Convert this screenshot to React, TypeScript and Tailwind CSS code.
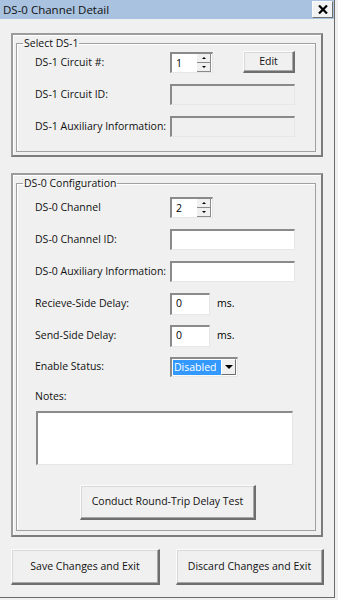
import React from "react";

const font = { fontFamily: '"Open Sans", "Liberation Sans", sans-serif' };

function Sunken({
  className = "",
  white = false,
  children,
}: {
  className?: string;
  white?: boolean;
  children?: React.ReactNode;
}) {
  return (
    <div
      className={`border-t-2 border-l-2 border-t-[#8a8a8a] border-l-[#8a8a8a] border-b border-r border-b-[#e6e6e6] border-r-[#e6e6e6] ${
        white ? "bg-white" : "bg-[#f0f0f0]"
      } ${className}`}
    >
      {children}
    </div>
  );
}

function RaisedButton({
  className = "",
  children,
}: {
  className?: string;
  children: React.ReactNode;
}) {
  return (
    <button
      className={`flex items-center justify-center bg-[#f0f0f0] border-t border-l border-t-[#fcfcfc] border-l-[#fcfcfc] border-b-2 border-r-2 border-b-[#6e6e6e] border-r-[#6e6e6e] shadow-[inset_-1px_-1px_0_#a8a8a8,inset_1px_1px_0_#d8d8d8] text-[#111] ${className}`}
    >
      {children}
    </button>
  );
}

function Spinner({ value }: { value: string }) {
  return (
    <Sunken white className="w-[43px] h-[21px] flex items-center">
      <span className="pl-[4px] flex-1 leading-none">{value}</span>
      <div className="flex flex-col w-[14px] h-full mr-[1px]">
        <div className="flex-1 flex items-center justify-center bg-[#f0f0f0] border-b border-r border-b-[#8a8a8a] border-r-[#8a8a8a]">
          <span className="block w-0 h-0 border-l-[2px] border-r-[2px] border-b-[2px] border-l-transparent border-r-transparent border-b-black" />
        </div>
        <div className="flex-1 flex items-center justify-center bg-[#f0f0f0] border-b border-r border-b-[#8a8a8a] border-r-[#8a8a8a]">
          <span className="block w-0 h-0 border-l-[2px] border-r-[2px] border-t-[2px] border-l-transparent border-r-transparent border-t-black" />
        </div>
      </div>
    </Sunken>
  );
}

function Row({
  label,
  children,
  className = "",
}: {
  label: string;
  children: React.ReactNode;
  className?: string;
}) {
  return (
    <div className={`flex items-center h-[21px] ${className}`}>
      <span className="w-[135px] shrink-0 text-[#111]">{label}</span>
      {children}
    </div>
  );
}

function Frame({
  className = "",
  children,
}: {
  className?: string;
  children: React.ReactNode;
}) {
  return (
    <div
      className={`ml-[11px] w-[312px] border-2 border-t-[#9c9c9c] border-l-[#9c9c9c] border-b-[#7c7c7c] border-r-[#7c7c7c] shadow-[inset_1px_1px_0_#ffffff] pl-[3px] ${className}`}
    >
      {children}
    </div>
  );
}

export default function App() {
  return (
    <div
      className="w-[338px] h-[600px] bg-[#f0f0f0] text-[10.5px] text-black"
      style={font}
    >
      <div className="w-[335px] h-[598px] border-r border-b border-[#6a6a6a] flex flex-col">
        {/* title bar */}
        <div className="h-[19px] bg-[#a9c2df] flex items-center justify-between pl-[3px]">
          <span className="text-[11.5px] text-[#111]">DS-0 Channel Detail</span>
          <div className="w-[21px] h-[17px] mr-[1px] bg-[#f2f2f2] border border-[#fafafa] border-r-[#707070] border-b-[#707070] flex items-center justify-center">
            <svg width="10" height="9" viewBox="0 0 10 9">
              <path d="M1 0.5 L9 8.5 M9 0.5 L1 8.5" stroke="#000" strokeWidth="2.2" />
            </svg>
          </div>
        </div>

        {/* Select DS-1 */}
        <Frame className="mt-[14px] h-[124px] pt-px">
          <fieldset className="w-[300px] h-[116px] border border-[#a0a0a0] shadow-[inset_1px_1px_0_#ffffff] pl-[18px] pt-[2px]">
            <legend className="-ml-[12px] px-px leading-[14px] text-[#111]">
              Select DS-1
            </legend>
            <Row label="DS-1 Circuit #:">
              <Spinner value="1" />
              <RaisedButton className="ml-[30px] w-[52px] h-[22px] -mt-px">
                Edit
              </RaisedButton>
            </Row>
            <Row label="DS-1 Circuit ID:" className="mt-[11px]">
              <Sunken className="w-[125px] h-[21px]" />
            </Row>
            <Row label="DS-1 Auxiliary Information:" className="mt-[11px]">
              <Sunken className="w-[125px] h-[21px]" />
            </Row>
          </fieldset>
        </Frame>

        {/* DS-0 Configuration */}
        <Frame className="mt-[16px] h-[364px] pt-px">
          <fieldset className="w-[300px] h-[355px] border border-[#a0a0a0] shadow-[inset_1px_1px_0_#ffffff] pl-[18px] pt-[7px]">
            <legend className="-ml-[12px] px-px leading-[14px] text-[#111]">
              DS-0 Configuration
            </legend>
            <Row label="DS-0 Channel">
              <Spinner value="2" />
            </Row>
            <Row label="DS-0 Channel ID:" className="mt-[11px]">
              <Sunken white className="w-[125px] h-[21px]" />
            </Row>
            <Row label="DS-0 Auxiliary Information:" className="mt-[11px]">
              <Sunken white className="w-[125px] h-[21px]" />
            </Row>
            <Row label="Recieve-Side Delay:" className="mt-[11px]">
              <Sunken white className="w-[40px] h-[22px] flex items-center pl-[4px]">
                0
              </Sunken>
              <span className="ml-[7px]">ms.</span>
            </Row>
            <Row label="Send-Side Delay:" className="mt-[11px]">
              <Sunken white className="w-[40px] h-[22px] flex items-center pl-[4px]">
                0
              </Sunken>
              <span className="ml-[7px]">ms.</span>
            </Row>
            <Row label="Enable Status:" className="mt-[10px]">
              <Sunken white className="w-[68px] h-[20px] flex items-center">
                <span className="ml-px w-[50px] h-[15px] bg-[#3399ff] text-white leading-[15px] pl-px">
                  Disabled
                </span>
                <div className="ml-auto mr-px w-[15px] h-[16px] bg-[#f0f0f0] border-t border-l border-t-white border-l-white border-b border-r border-b-[#6e6e6e] border-r-[#6e6e6e] flex items-center justify-center">
                  <span className="block w-0 h-0 border-l-[4px] border-r-[4px] border-t-[4px] border-l-transparent border-r-transparent border-t-black" />
                </div>
              </Sunken>
            </Row>
            <div className="mt-[12px] leading-[14px] text-[#111]">Notes:</div>
            <Sunken white className="mt-[8px] ml-px w-[257px] h-[54px]" />
            <RaisedButton className="mt-[20px] ml-[45px] w-[176px] h-[35px]">
              Conduct Round-Trip Delay Test
            </RaisedButton>
          </fieldset>
        </Frame>

        {/* bottom buttons */}
        <div className="mt-[12px] ml-[11px] flex gap-[16px]">
          <RaisedButton className="w-[149px] h-[36px]">
            Save Changes and Exit
          </RaisedButton>
          <RaisedButton className="w-[148px] h-[36px]">
            Discard Changes and Exit
          </RaisedButton>
        </div>
      </div>
    </div>
  );
}
